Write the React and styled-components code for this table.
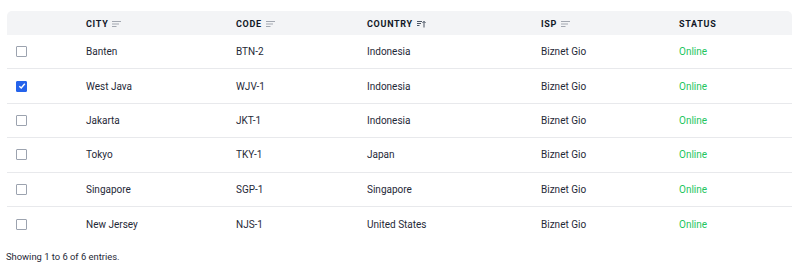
import React from 'react';
import styled, { createGlobalStyle } from 'styled-components';

const GlobalStyle = createGlobalStyle`
  body {
    margin: 0;
    background: #ffffff;
    font-family: Roboto, "Liberation Sans", Arial, sans-serif;
    color: #1f2937;
  }
`;

const columns = '79px 150px 131px 174px 138px 1fr';

const rows = [
  { city: 'Banten', code: 'BTN-2', country: 'Indonesia', isp: 'Biznet Gio', checked: false },
  { city: 'West Java', code: 'WJV-1', country: 'Indonesia', isp: 'Biznet Gio', checked: true },
  { city: 'Jakarta', code: 'JKT-1', country: 'Indonesia', isp: 'Biznet Gio', checked: false },
  { city: 'Tokyo', code: 'TKY-1', country: 'Japan', isp: 'Biznet Gio', checked: false },
  { city: 'Singapore', code: 'SGP-1', country: 'Singapore', isp: 'Biznet Gio', checked: false },
  { city: 'New Jersey', code: 'NJS-1', country: 'United States', isp: 'Biznet Gio', checked: false },
];

function SortIcon({ asc }) {
  if (asc) {
    return (
      <svg width="9" height="8" viewBox="0 0 9 8" fill="none" stroke="#4b5563" strokeWidth="1">
        <path d="M0 1.5h5M0 3.5h4M0 5.5h2.5" />
        <path d="M7 7.5V1.5M5.5 3L7 1.3 8.5 3" />
      </svg>
    );
  }
  return (
    <svg width="9" height="8" viewBox="0 0 9 8" fill="none" stroke="#a3a8b1" strokeWidth="1">
      <path d="M0 1.5h9M0 4h7M0 6.5h4.5" />
    </svg>
  );
}

export default function App() {
  return (
    <Page>
      <GlobalStyle />
      <Table>
        <HeaderRow>
          <Cell />
          <HeadCell>CITY <SortIcon /></HeadCell>
          <HeadCell>CODE <SortIcon /></HeadCell>
          <HeadCell>COUNTRY <SortIcon asc /></HeadCell>
          <HeadCell>ISP <SortIcon /></HeadCell>
          <HeadCell>STATUS</HeadCell>
        </HeaderRow>
        {rows.map((r, i) => (
          <Row key={r.code} $last={i === rows.length - 1}>
            <CheckCell>
              <Check $checked={r.checked}>
                {r.checked && (
                  <svg width="8" height="8" viewBox="0 0 8 8" fill="none" stroke="#fff" strokeWidth="1.4">
                    <path d="M1.3 4.3L3.2 6 6.8 1.8" />
                  </svg>
                )}
              </Check>
            </CheckCell>
            <Cell>{r.city}</Cell>
            <Cell>{r.code}</Cell>
            <Cell>{r.country}</Cell>
            <Cell>{r.isp}</Cell>
            <Status>Online</Status>
          </Row>
        ))}
      </Table>
      <Footer>Showing 1 to 6 of 6 entries.</Footer>
    </Page>
  );
}

const Page = styled.div`
  width: 800px;
  padding: 11px 8px 0 7px;
  box-sizing: border-box;
`;

const Table = styled.div`
  display: flex;
  flex-direction: column;
`;

const HeaderRow = styled.div`
  display: grid;
  grid-template-columns: ${columns};
  height: 24px;
  align-items: center;
  background: #f3f4f6;
  border-radius: 5px 5px 0 0;
`;

const Row = styled.div`
  display: grid;
  grid-template-columns: ${columns};
  height: 34.4px;
  align-items: center;
  border-bottom: ${(p) => (p.$last ? 'none' : '1px solid #e8e9ec')};
  box-sizing: border-box;
`;

const Cell = styled.div`
  font-size: 10px;
  color: #1f2937;
  white-space: nowrap;
`;

const HeadCell = styled.div`
  display: flex;
  align-items: center;
  gap: 4px;
  padding-top: 1px;
  font-size: 9px;
  font-weight: 700;
  letter-spacing: 0.7px;
  color: #111827;
`;

const CheckCell = styled.div`
  padding-left: 9px;
  display: flex;
  align-items: center;
`;

const Check = styled.div`
  width: 11px;
  height: 11px;
  box-sizing: border-box;
  border-radius: 1px;
  border: 1px solid ${(p) => (p.$checked ? '#2563eb' : '#9ca3af')};
  background: ${(p) => (p.$checked ? '#2563eb' : '#fff')};
  display: flex;
  align-items: center;
  justify-content: center;
`;

const Status = styled(Cell)`
  color: #22c55e;
`;

const Footer = styled.div`
  margin-top: 10px;
  margin-left: -1px;
  font-size: 9.4px;
  color: #1f2937;
`;
